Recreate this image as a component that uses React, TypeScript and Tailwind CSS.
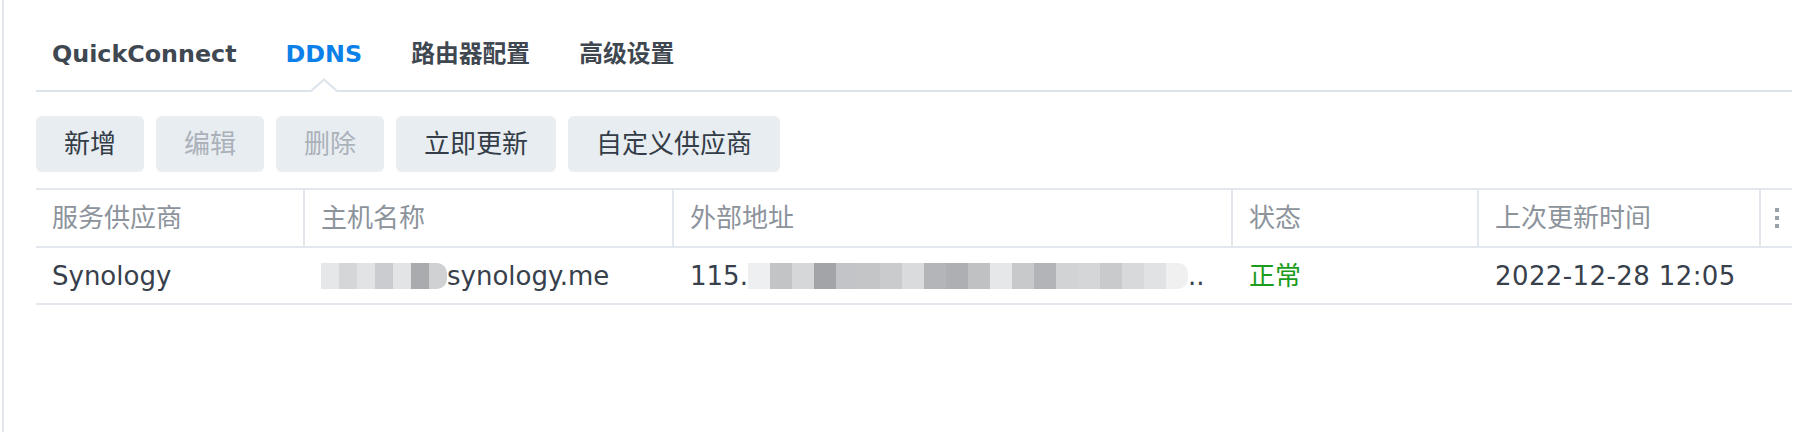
import React from "react";

const FONT = { fontFamily: '"DejaVu Sans", "Noto Sans CJK SC", sans-serif' };

const hostShades = ["#e6e7e9", "#d5d6d8", "#e2e3e5", "#cbcccf", "#e3e4e6", "#a9abae", "#d0d1d3"];
const addrShades = [
  "#eeeff0", "#c3c4c6", "#d6d7d9", "#a3a4a7", "#c3c4c7", "#c4c5c7", "#cacbcd", "#dadbdd",
  "#b4b5b8", "#aeafb2", "#c0c1c3", "#e6e7e8", "#c8c9cb", "#b3b4b7", "#d2d3d5", "#d5d6d8",
  "#c9cacc", "#d8d9db", "#e1e2e4", "#f0f0f1",
];

function Mosaic({ shades, block }: { shades: string[]; block: number }) {
  return (
    <span className="inline-flex h-[26px] items-stretch overflow-hidden rounded-r-[10px] align-middle">
      {shades.map((c, i) => (
        <span key={i} className="block h-full" style={{ background: c, width: block }} />
      ))}
    </span>
  );
}

export default function App() {
  const tabs = ["QuickConnect", "DDNS", "路由器配置", "高级设置"];
  const buttons = [
    { label: "新增", disabled: false },
    { label: "编辑", disabled: true },
    { label: "删除", disabled: true },
    { label: "立即更新", disabled: false },
    { label: "自定义供应商", disabled: false },
  ];
  return (
    <div className="h-[432px] w-[1814px] overflow-hidden bg-white" style={FONT}>
      <div className="ml-[2px] h-full border-l-2 border-[#e2e7ed] pl-[32px] pr-[22px]">
        {/* Tabs */}
        <div className="flex h-[92px] items-stretch gap-[49px] border-b-2 border-[#dbe3eb] pl-[16px] pt-[19px]">
          {tabs.map((t, i) => (
            <div
              key={t}
              className={`relative flex items-center text-[23.8px] font-bold leading-none ${
                i === 1 ? "text-[#0b80e8]" : "text-[#3f4751]"
              }`}
            >
              {t}
              {i === 1 && (
                <svg
                  className="absolute bottom-[-2px] left-1/2 -translate-x-1/2"
                  width="26"
                  height="14"
                  viewBox="0 0 26 14"
                >
                  <polygon points="0,14 13,1 26,14" fill="#ffffff" />
                  <polyline points="0,13 13,1.5 26,13" fill="none" stroke="#dbe3eb" strokeWidth="2" />
                </svg>
              )}
            </div>
          ))}
        </div>

        {/* Toolbar */}
        <div className="mt-[24px] flex gap-[12px]">
          {buttons.map((b) => (
            <div
              key={b.label}
              className={`flex h-[56px] items-center rounded-[6px] bg-[#e8edf1] px-[28px] text-[26px] leading-none ${
                b.disabled ? "text-[#aab1b9]" : "text-[#333c47]"
              }`}
            >
              {b.label}
            </div>
          ))}
        </div>

        {/* Table */}
        <div className="mt-[16px] border-t-2 border-[#e3e8ee] text-[26px] leading-none">
          <div className="grid h-[58px] grid-cols-[267px_369px_559px_246px_282px_1fr] border-b-2 border-[#e3e8ee] text-[#8c939b]">
            <div className="flex items-center px-4">服务供应商</div>
            <div className="flex items-center border-l-2 border-[#e3e8ee] px-4">主机名称</div>
            <div className="flex items-center border-l-2 border-[#e3e8ee] px-4">外部地址</div>
            <div className="flex items-center border-l-2 border-[#e3e8ee] px-4">状态</div>
            <div className="flex items-center border-l-2 border-[#e3e8ee] px-4">上次更新时间</div>
            <div className="flex flex-col items-center justify-center gap-[4px] border-l-2 border-[#e3e8ee]">
              <span className="block h-[4px] w-[4px] bg-[#9ba1a8]" />
              <span className="block h-[4px] w-[4px] bg-[#9ba1a8]" />
              <span className="block h-[4px] w-[4px] bg-[#9ba1a8]" />
            </div>
          </div>
          <div className="grid h-[57px] grid-cols-[267px_369px_559px_246px_282px_1fr] border-b-2 border-[#e3e8ee] text-[#37404b]">
            <div className="flex items-center px-4">Synology</div>
            <div className="flex items-center whitespace-nowrap pl-[18px]">
              <Mosaic shades={hostShades} block={18} />
              <span>synology.me</span>
            </div>
            <div className="flex items-center whitespace-nowrap pl-[18px]">
              <span>115.</span>
              <Mosaic shades={addrShades} block={22} />
              <span>..</span>
            </div>
            <div className="flex items-center pl-[18px] text-[#1c9c1c]">正常</div>
            <div className="flex items-center whitespace-nowrap pl-[18px] tracking-[0.4px]">2022-12-28 12:05</div>
            <div />
          </div>
        </div>
      </div>
    </div>
  );
}
